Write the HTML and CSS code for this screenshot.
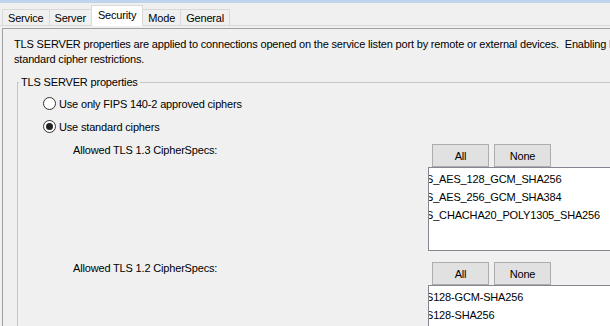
FILE: index.html
```html
<!DOCTYPE html>
<html>
<head>
<meta charset="utf-8">
<link rel="stylesheet" href="styles.css">
</head>
<body>
<div class="window">
  <div class="titlestrip"></div>
  <div class="tabs">
    <div class="tab">Service</div>
    <div class="tab">Server</div>
    <div class="tab tab-active">Security</div>
    <div class="tab">Mode</div>
    <div class="tab">General</div>
  </div>
  <div class="panel">
    <p class="desc">TLS SERVER properties are applied to connections opened on the service listen port by remote or external devices.&nbsp; Enabling FIPS 140-2 mode enforces<br>standard cipher restrictions.</p>
    <fieldset class="group">
      <legend class="group-title">TLS SERVER properties</legend>
      <div class="radios">
        <label class="radio-row"><span class="radio"></span><span>Use only FIPS 140-2 approved ciphers</span></label>
        <label class="radio-row"><span class="radio radio-on"></span><span>Use standard ciphers</span></label>
      </div>
      <div class="cipher">
        <div class="cipher-label">Allowed TLS 1.3 CipherSpecs:</div>
        <div class="cipher-side">
          <div class="btns"><button class="btn">All</button><button class="btn">None</button></div>
          <div class="list list-13">
            <div class="item"><span class="pre"><span>TL</span></span>S_AES_128_GCM_SHA256</div>
            <div class="item"><span class="pre"><span>TL</span></span>S_AES_256_GCM_SHA384</div>
            <div class="item"><span class="pre"><span>TL</span></span>S_CHACHA20_POLY1305_SHA256</div>
          </div>
        </div>
      </div>
      <div class="cipher">
        <div class="cipher-label">Allowed TLS 1.2 CipherSpecs:</div>
        <div class="cipher-side">
          <div class="btns"><button class="btn">All</button><button class="btn">None</button></div>
          <div class="list list-12">
            <div class="item"><span class="pre"><span>ECDHE_RSA_AE</span></span>S128-GCM-SHA256</div>
            <div class="item"><span class="pre"><span>ECDHE_RSA_AE</span></span>S128-SHA256</div>
          </div>
        </div>
      </div>
    </fieldset>
  </div>
</div>
</body>
</html>
```
FILE: styles.css
```css
html, body {
  margin: 0;
  padding: 0;
  background: #f0f0f0;
  overflow: hidden;
}
body {
  width: 610px;
  height: 326px;
  font-family: "Liberation Sans", Arial, sans-serif;
  font-size: 11px;
  letter-spacing: -0.17px;
  color: #000;
}
.window {
  width: 760px;
}
.titlestrip {
  height: 3px;
  background: #bfd5ec;
}
.tabs {
  display: flex;
  align-items: flex-end;
  height: 22px;
  padding-left: 2px;
  border-bottom: 1px solid #d9d9d9;
}
.tab {
  height: 15px;
  line-height: 16px;
  padding: 0 5px;
  border: 1px solid #d9d9d9;
  border-bottom: none;
  margin-left: -1px;
  background: #f0f0f0;
  white-space: nowrap;
}
.tab:first-child {
  margin-left: 0;
}
.tab-active {
  height: 20px;
  line-height: 18px;
  margin-bottom: -1px;
  background: #ffffff;
  padding: 0 6px;
  position: relative;
  z-index: 1;
}
.panel {
  margin: 2px 0 0 2px;
  border: 1px solid #a0a0a0;
  border-right: none;
  padding: 8px 0 0 11px;
  height: 400px;
}
.desc {
  margin: 0;
  line-height: 15px;
  white-space: nowrap;
}
.group {
  margin: 8px 0 0 3px;
  padding: 0;
  border: 1px solid #c6c6c6;
  border-right: none;
  min-width: 0;
}
.group-title {
  margin-left: 1px;
  padding: 0 2px;
  line-height: 15px;
}
.radios {
  margin-top: 2px;
  display: flex;
  flex-direction: column;
}
.radio-row {
  display: flex;
  align-items: center;
  height: 23px;
  padding-left: 25px;
  gap: 3px;
}
.radio {
  box-sizing: border-box;
  width: 13px;
  height: 13px;
  border: 1px solid #333;
  border-radius: 50%;
  background: #fff;
  display: flex;
  align-items: center;
  justify-content: center;
}
.radio-on::after {
  content: "";
  width: 7px;
  height: 7px;
  border-radius: 50%;
  background: #222;
}
.cipher {
  display: grid;
  grid-template-columns: 410px auto;
  margin-top: 6px;
}
.cipher + .cipher {
  margin-top: 11px;
}
.cipher-label {
  padding-left: 55px;
  line-height: 13px;
  padding-top: 0;
}
.cipher-side {
  display: flex;
  flex-direction: column;
}
.btns {
  display: flex;
  gap: 5px;
  padding-left: 4px;
}
.btn {
  box-sizing: border-box;
  width: 57px;
  height: 23px;
  margin: 0;
  padding: 0;
  border: 1px solid #adadad;
  background: #e1e1e1;
  font-family: inherit;
  font-size: 11px;
  letter-spacing: inherit;
  color: #000;
}
.list {
  box-sizing: border-box;
  width: 300px;
  margin-top: 0;
  border: 1px solid #828790;
  background: #fff;
  overflow: hidden;
  padding-top: 2px;
}
.list-13 {
  height: 84px;
}
.list-12 {
  height: 80px;
}
.item {
  line-height: 18px;
  white-space: nowrap;
  margin-left: -3px;
}
.pre {
  display: inline-flex;
  width: 0;
  justify-content: flex-end;
}
```
